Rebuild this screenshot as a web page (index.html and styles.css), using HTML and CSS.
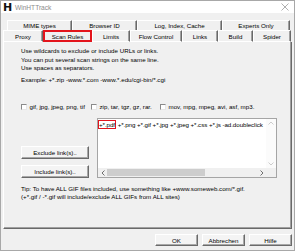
FILE: index.html
```html
<!DOCTYPE html>
<html lang="de">
<head>
    <meta charset="utf-8">
    <title>WinHTTrack</title>
    <link rel="stylesheet" href="styles.css">
</head>
<body>

<div class="window">
    <div class="titlebar">
        <span class="app-icon">H</span>
        <span class="title">WinHTTrack</span>
        <svg class="close" width="8" height="8" viewBox="0 0 8 8">
            <path d="M0.5 0.5 L7.5 7.5 M7.5 0.5 L0.5 7.5" stroke="#9a9a9a" stroke-width="0.8" fill="none"/>
        </svg>
    </div>

    <div class="tabs">
        <div class="tab-row back">
            <div class="tab">MIME types</div>
            <div class="tab">Browser ID</div>
            <div class="tab">Log, Index, Cache</div>
            <div class="tab">Experts Only</div>
        </div>
        <div class="tab-row front">
            <div class="tab">Proxy</div>
            <div class="tab active marked">Scan Rules</div>
            <div class="tab">Limits</div>
            <div class="tab">Flow Control</div>
            <div class="tab">Links</div>
            <div class="tab">Build</div>
            <div class="tab">Spider</div>
        </div>
    </div>

    <div class="page">
        <p class="intro">Use wildcards to exclude or include URLs or links.<br>You can put several scan strings on the same line.<br>Use spaces as separators.</p>
        <p class="example">Example: +*.zip -www.*.com -www.*.edu/cgi-bin/*.cgi</p>

        <div class="types">
            <label class="type"><span class="box"></span>gif, jpg, jpeg, png, tif</label>
            <label class="type"><span class="box"></span>zip, tar, tgz, gz, rar.</label>
            <label class="type"><span class="box"></span>mov, mpg, mpeg, avi, asf, mp3.</label>
        </div>

        <div class="rules">
            <div class="rule-buttons">
                <button class="btn">Exclude link(s)..</button>
                <button class="btn">Include link(s)..</button>
            </div>
            <div class="rules-box">
                <div class="rules-text"><span class="pdf">+*.pdf</span> +*.png +*.gif +*.jpg +*.jpeg +*.css +*.js -ad.doubleclick</div>
                <div class="vscroll">
                    <svg width="6" height="4" viewBox="0 0 6 4"><path d="M0.5 3.5 L3 1 L5.5 3.5" stroke="#c2c2c2" stroke-width="0.8" fill="none"/></svg>
                    <svg width="6" height="4" viewBox="0 0 6 4"><path d="M0.5 0.5 L3 3 L5.5 0.5" stroke="#c2c2c2" stroke-width="0.8" fill="none"/></svg>
                </div>
                <div class="hscroll">
                    <span class="arrow"><svg width="4" height="6" viewBox="0 0 4 6"><path d="M3.5 0.5 L1 3 L3.5 5.5" stroke="#606060" stroke-width="0.9" fill="none"/></svg></span>
                    <span class="thumb"></span>
                    <span class="track"></span>
                    <span class="arrow"><svg width="4" height="6" viewBox="0 0 4 6"><path d="M0.5 0.5 L3 3 L0.5 5.5" stroke="#606060" stroke-width="0.9" fill="none"/></svg></span>
                </div>
                <div class="corner"></div>
            </div>
        </div>

        <p class="tip">Tip: To have ALL GIF files included, use something like +www.someweb.com/*.gif.<br>(+*.gif / -*.gif will include/exclude ALL GIFs from ALL sites)</p>
    </div>

    <div class="actions">
        <button class="btn">OK</button>
        <button class="btn">Abbrechen</button>
        <button class="btn">Hilfe</button>
    </div>
</div>

</body>
</html>
```

FILE: styles.css
```css
* {
    margin: 0;
    padding: 0;
    box-sizing: border-box;
}

body {
    font-family: "Liberation Sans", Arial, sans-serif;
    font-size: 6.2px;
    color: #000;
    background-color: #f0f0f0;
    width: 295px;
    height: 251px;
    overflow: hidden;
}

.window {
    width: 295px;
    height: 251px;
    border: 1px solid #a8a8a8;
    display: flex;
    flex-direction: column;
}

/* title bar */

.titlebar {
    height: 12px;
    background: #fff;
    display: flex;
    align-items: center;
    padding: 0 5px 0 2px;
}

.app-icon {
    width: 9px;
    font: 900 11px/9px "DejaVu Sans", sans-serif;
    text-align: center;
    color: #111;
}

.title {
    margin-left: 3px;
    font-size: 6.6px;
    color: #8c8c8c;
}

.close {
    margin-left: auto;
}

/* tabs */

.tabs {
    margin-top: 7px;
    padding: 0 2px;
}

.tab-row {
    display: grid;
}

.tab-row.back {
    height: 10px;
    margin-left: 4px;
    grid-template-columns: 65px 65px 85px 68px;
}

.tab-row.front {
    height: 12px;
    grid-template-columns: 40px 49px 38px 52px 36px 35px 38px;
}

.tab {
    display: flex;
    align-items: center;
    justify-content: center;
    border-top: 1px solid #fff;
    border-left: 1px solid #fff;
    border-right: 1px solid #696969;
    box-shadow: inset -1px 0 0 #a0a0a0;
    white-space: nowrap;
}

.front .tab {
    border-bottom: 1px solid #fff;
}

.front .tab.active {
    border-bottom: none;
}

.marked {
    outline: 2px solid #e3141c;
    outline-offset: -2px;
}

/* page */

.page {
    flex: 1;
    margin: 0 2px;
    padding: 5px 14px 0 17px;
    border-left: 1px solid #fff;
    border-right: 1px solid #696969;
    border-bottom: 1px solid #696969;
    box-shadow: inset -1px -1px 0 #a0a0a0;
}

.intro {
    line-height: 8.5px;
}

.example {
    margin-top: 3.5px;
    line-height: 8.5px;
}

.types {
    display: grid;
    grid-template-columns: 70px 69px auto;
    margin-top: 18px;
    line-height: 8.5px;
}

.type {
    display: flex;
    align-items: center;
    gap: 2.5px;
    white-space: nowrap;
}

.box {
    width: 6px;
    height: 6px;
    background: #fff;
    border: 1px solid;
    border-color: #8a8a8a #e6e6e6 #e6e6e6 #8a8a8a;
}

.rules {
    display: flex;
    gap: 8px;
    height: 60px;
    margin-top: 7px;
}

.rule-buttons {
    width: 68px;
    display: flex;
    flex-direction: column;
    justify-content: flex-end;
    gap: 6px;
}

.btn {
    height: 13px;
    font: inherit;
    color: #000;
    background: #f4f4f4;
    border: 1px solid;
    border-color: #fff #6a6a6a #6a6a6a #fff;
    box-shadow: inset -1px -1px 0 #a8a8a8;
}

.rules-box {
    flex: 1;
    display: grid;
    grid-template-columns: 1fr 10px;
    grid-template-rows: 1fr 9px;
    background: #fff;
    border: 1px solid #a5a5a5;
}

.rules-text {
    padding: 2px 0 0 1px;
    line-height: 8px;
    letter-spacing: -0.06px;
    white-space: nowrap;
    overflow: hidden;
}

.pdf {
    margin-left: -1px;
    border: 1.5px solid #e3141c;
}

.vscroll {
    display: flex;
    flex-direction: column;
    justify-content: space-between;
    align-items: center;
    padding: 2px 0;
    background: #fbfbfb;
}

.hscroll {
    display: flex;
    align-items: center;
    background: #f0f0f0;
}

.hscroll .arrow {
    width: 9px;
    display: flex;
    justify-content: center;
}

.hscroll .thumb {
    width: 98px;
    height: 7px;
    background: #cdcdcd;
}

.hscroll .track {
    flex: 1;
}

.corner {
    background: #f0f0f0;
}

.tip {
    margin-top: 7px;
    line-height: 8px;
}

/* dialog buttons */

.actions {
    display: flex;
    justify-content: flex-end;
    gap: 4px;
    margin: 5px 2px 4px;
}

.actions .btn {
    width: 43px;
    height: 12px;
}
```
